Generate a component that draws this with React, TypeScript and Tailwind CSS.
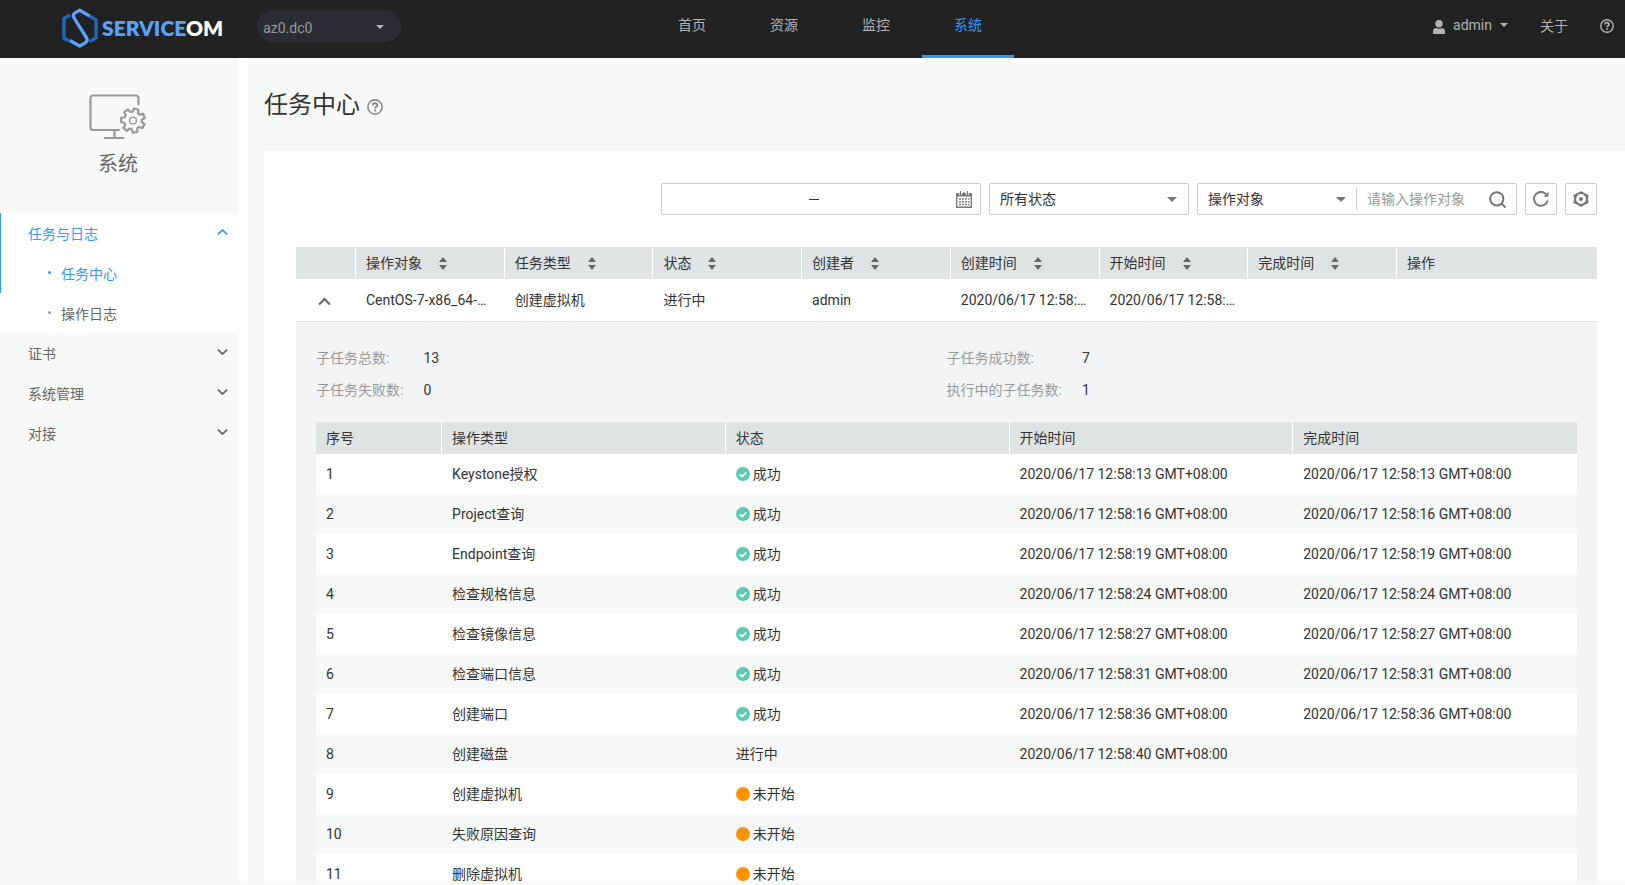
import React, { useState } from "react";

type Task = {
  id: number;
  type: string;
  status: "success" | "running" | "pending";
  start: string;
  end: string;
};

const tasks: Task[] = [
  { id: 1, type: "Keystone授权", status: "success", start: "2020/06/17 12:58:13 GMT+08:00", end: "2020/06/17 12:58:13 GMT+08:00" },
  { id: 2, type: "Project查询", status: "success", start: "2020/06/17 12:58:16 GMT+08:00", end: "2020/06/17 12:58:16 GMT+08:00" },
  { id: 3, type: "Endpoint查询", status: "success", start: "2020/06/17 12:58:19 GMT+08:00", end: "2020/06/17 12:58:19 GMT+08:00" },
  { id: 4, type: "检查规格信息", status: "success", start: "2020/06/17 12:58:24 GMT+08:00", end: "2020/06/17 12:58:24 GMT+08:00" },
  { id: 5, type: "检查镜像信息", status: "success", start: "2020/06/17 12:58:27 GMT+08:00", end: "2020/06/17 12:58:27 GMT+08:00" },
  { id: 6, type: "检查端口信息", status: "success", start: "2020/06/17 12:58:31 GMT+08:00", end: "2020/06/17 12:58:31 GMT+08:00" },
  { id: 7, type: "创建端口", status: "success", start: "2020/06/17 12:58:36 GMT+08:00", end: "2020/06/17 12:58:36 GMT+08:00" },
  { id: 8, type: "创建磁盘", status: "running", start: "2020/06/17 12:58:40 GMT+08:00", end: "" },
  { id: 9, type: "创建虚拟机", status: "pending", start: "", end: "" },
  { id: 10, type: "失败原因查询", status: "pending", start: "", end: "" },
  { id: 11, type: "删除虚拟机", status: "pending", start: "", end: "" },
];

function Caret({ className = "" }: { className?: string }) {
  return (
    <svg viewBox="0 0 10 5" className={className} fill="currentColor" aria-hidden="true">
      <path d="M0 0h10L5 5z" />
    </svg>
  );
}

function Chevron({ up = false, className = "" }: { up?: boolean; className?: string }) {
  return (
    <svg viewBox="0 0 12 8" className={className} fill="none" stroke="currentColor" strokeWidth="1.9" aria-hidden="true">
      <path d={up ? "M1 6.7 6 1.7l5 5" : "M1 1.3l5 5 5-5"} />
    </svg>
  );
}

function HelpIcon({ className = "" }: { className?: string }) {
  return (
    <svg viewBox="0 0 16 16" className={className} fill="none" stroke="currentColor" aria-hidden="true">
      <circle cx="8" cy="8" r="7.1" strokeWidth="1.6" />
      <path d="M5.7 6.4C5.700 5 6.700 4.200 8 4.200s2.300.8 2.300 2c0 1.500-2.200 1.600-2.200 3.300" strokeWidth="1.900" />
      <path d="M8.100 10.500v1.900" strokeWidth="2" />
    </svg>
  );
}

function SortIcon() {
  return (
    <svg viewBox="0 0 8 13" className="h-[13px] w-2 shrink-0 text-[#666]" fill="currentColor" aria-hidden="true">
      <path d="M4 0l4 5H0zM0 8h8l-4 5z" />
    </svg>
  );
}

function LogoMark() {
  return (
    <svg viewBox="0 0 36 40" className="h-10 w-9" fill="none" strokeWidth="3.4" aria-hidden="true">
      <path d="M8 7 1.900 10.600V30l5.600 3.200M27.500 8l6.600 3.900v17.800l-6.400 3.900" stroke="#2068b8" />
      <path d="M27.500 8 17.700 2.200l-4.600 2.700c-2 1.300-2.200 3.100-1 5.100l12.200 19.500c1.400 2.300.9 4.100-1 5.300l-5.600 3.200L8 32.500" stroke="#57a3fb" strokeLinejoin="round" />
    </svg>
  );
}

function gearPath(cx: number, cy: number) {
  const step = 360 / 7;
  const at = (r: number, deg: number) => {
    const a = (deg * Math.PI) / 180;
    return `${(cx + r * Math.cos(a)).toFixed(2)} ${(cy + r * Math.sin(a)).toFixed(2)}`;
  };
  const points: string[] = [];
  for (let i = 0; i < 7; i++) {
    const c = 80 + i * step;
    points.push(at(8.9, c - 18), at(12.1, c - 11), at(12.1, c + 11), at(8.9, c + 18));
  }
  return `M${points.join("L")}Z`;
}

function SystemIcon() {
  return (
    <svg viewBox="0 0 58 46" className="h-[46px] w-[58px]" fill="none" stroke="#999" strokeWidth="2.2" strokeLinecap="round" strokeLinejoin="round" aria-hidden="true">
      <path d="M49.500 10.500V4A2.500 2.500 0 0 0 47 1.500H4A2.500 2.500 0 0 0 1.500 4v29.500A2.500 2.500 0 0 0 4 36H30" />
      <path d="M25.500 36v7.500M16 44h18.500" />
      <path d={gearPath(44, 26.5)} />
      <circle cx="44" cy="26.5" r="3.4" strokeWidth="1.4" />
    </svg>
  );
}

function CalendarIcon() {
  return (
    <svg viewBox="0 0 16 17" className="h-[17px] w-4 text-[#777]" fill="none" stroke="currentColor" aria-hidden="true">
      <path d="M.7 3h14.600v13.200H.7z" strokeWidth="1.400" />
      <path d="M1 2.500h14v3H1z" fill="currentColor" stroke="none" />
      <path d="M4.500 0v4M11.500 0v4" stroke="#fff" strokeWidth="2.600" />
      <path d="M4.500 0v4M8 1v3M11.500 0v4" strokeWidth="1.200" />
      <path d="M3 8h2m1 0h2m1 0h2m1 0h1.500M3 10.700h2m1 0h2m1 0h2m1 0h1.500M3 13.400h2m1 0h2m1 0h2m1 0h1.500" strokeWidth="1.500" />
    </svg>
  );
}

function StatusCell({ status }: { status: Task["status"] }) {
  if (status === "running") return <>进行中</>;
  return (
    <span className="flex items-center gap-[3px]">
      {status === "success" ? (
        <svg viewBox="0 0 14 14" className="size-3.5" aria-hidden="true">
          <circle cx="7" cy="7" r="7" fill="#5acab2" />
          <path d="M3.700 7.200 6.200 9.600l4.200-4.400" fill="none" stroke="#fff" strokeWidth="1.600" />
        </svg>
      ) : (
        <span className="size-3.5 rounded-full bg-[#ff9300]" />
      )}
      {status === "success" ? "成功" : "未开始"}
    </span>
  );
}

function Header() {
  const items = ["首页", "资源", "监控", "系统"];
  return (
    <header className="flex h-[58px] shrink-0 bg-[#222] pl-[35px] text-[#b3b3b3]">
      <div className="flex min-w-0 flex-1 items-start">
        <a href="#home" className="mt-2 ml-[27px] flex items-center gap-1" aria-label="SERVICEOM">
          <LogoMark />
          <span className="font-[Lato] text-[21px] leading-10 font-extrabold text-[#57a3fb]">
            SERVICE<span className="text-white">OM</span>
          </span>
        </a>
        <div className="relative mt-2.5 ml-[34px] h-8 w-36">
          <select aria-label="区域" className="h-full w-full appearance-none rounded-full bg-[#2c2c35] pt-1 pl-1.5 text-[#999] outline-none">
            <option>az0.dc0</option>
          </select>
          <Caret className="pointer-events-none absolute top-[15px] right-[17px] h-1 w-2" />
        </div>
      </div>
      <nav className="flex">
        {items.map((label) => (
          <a
            key={label}
            href={`#${label}`}
            className={
              label === "系统"
                ? "flex w-[92px] justify-center border-b-3 border-[#3399ff] leading-[50px] text-[#3399ff]"
                : "flex w-[92px] justify-center leading-[50px]"
            }
          >
            {label}
          </a>
        ))}
      </nav>
      <div className="flex h-[50px] min-w-0 flex-1 items-center justify-end">
        <button className="flex items-center gap-2">
          <svg viewBox="0 0 12 14" className="mt-1 h-3.5 w-3" fill="currentColor" aria-hidden="true">
            <circle cx="6" cy="3.7" r="3.7" />
            <path d="M0 14v-2.500C0 9.500 1.300 8 3 8c1.800 1 4.200 1 6 0 1.700 0 3 1.500 3 3.500V14z" />
          </svg>
          admin
          <Caret className="h-1 w-2" />
        </button>
        <a href="#about" className="ml-8 pt-0.5">关于</a>
        <button aria-label="帮助" className="mr-[11px] ml-8 pt-0.5">
          <HelpIcon className="size-3.5" />
        </button>
      </div>
    </header>
  );
}

function Sidebar() {
  return (
    <aside className="w-[238px] shrink-0 bg-[#f7f9f8] text-[#666]">
      <div className="flex h-[155px] flex-col items-center pt-9 pr-0.5">
        <SystemIcon />
        <h2 className="mt-2 text-xl leading-8">系统</h2>
      </div>
      <nav>
        <div className="bg-white">
          <div className="border-l border-[#3399ff] text-[#3399ff]">
            <button className="flex h-10 w-full items-center justify-between pr-2.5 pl-[27px]">
              <span className="pt-0.5">任务与日志</span>
              <Chevron up className="mb-0.5 h-2 w-[11px]" />
            </button>
            <a href="#tasks" className="flex h-10 items-center gap-2.5 pl-[47px]">
              <span className="mb-0.5 size-[3px] rounded-full bg-current" />
              <span className="pt-0.5">任务中心</span>
            </a>
          </div>
          <a href="#logs" className="flex h-10 items-center gap-2.5 pl-12">
            <span className="mb-0.5 size-[3px] rounded-full bg-[#999]" />
            <span className="pt-0.5">操作日志</span>
          </a>
        </div>
        {["证书", "系统管理", "对接"].map((label) => (
          <button key={label} className="flex h-10 w-full items-center justify-between pr-2.5 pl-7">
            <span className="pt-0.5">{label}</span>
            <Chevron className="mb-0.5 h-2 w-[11px]" />
          </button>
        ))}
      </nav>
    </aside>
  );
}

function Toolbar() {
  return (
    <div className="flex h-8 justify-end gap-2">
      <div className="flex w-80 items-center rounded-xs border border-[#ccc] pr-2 pl-2.5">
        <input aria-label="起始日期" className="min-w-0 flex-1 outline-none" />
        <span className="h-px w-2.5 bg-[#333]" />
        <input aria-label="结束日期" className="min-w-0 flex-1 outline-none" />
        <button aria-label="选择日期">
          <CalendarIcon />
        </button>
      </div>
      <div className="relative w-[200px]">
        <select aria-label="状态" className="h-full w-full appearance-none rounded-xs border border-[#ccc] bg-white pl-2.5 outline-none">
          <option>所有状态</option>
        </select>
        <Caret className="pointer-events-none absolute top-3.5 right-3 h-[5px] w-2.5 text-[#777]" />
      </div>
      <div className="flex w-80 items-center rounded-xs border border-[#ccc]">
        <div className="relative h-[22px] w-[159px] border-r border-[#ccc]">
          <select aria-label="搜索字段" className="h-full w-full appearance-none bg-white pl-2.5 outline-none">
            <option>操作对象</option>
          </select>
          <Caret className="pointer-events-none absolute top-[9px] right-2.5 h-[5px] w-2.5 text-[#777]" />
        </div>
        <input aria-label="操作对象" placeholder="请输入操作对象" className="min-w-0 flex-1 pl-2.5 outline-none placeholder:text-[#999]" />
        <button aria-label="搜索" className="mr-2.5 text-[#777]">
          <svg viewBox="0 0 17 17" className="size-[17px]" fill="none" stroke="currentColor" strokeWidth="2" aria-hidden="true">
            <circle cx="7.8" cy="7.8" r="6.6" />
            <path d="m12.500 12.500 4 4" />
          </svg>
        </button>
      </div>
      <button aria-label="刷新" className="flex w-8 items-center justify-center rounded-xs border border-[#ccc] text-[#777]">
        <svg viewBox="0 0 16 16" className="size-4" fill="none" stroke="currentColor" strokeWidth="2" aria-hidden="true">
          <path d="M14.600 9.500A6.900 6.900 0 1 1 13 3.200" />
          <path d="M15.500.7v5.100h-5.100z" fill="currentColor" stroke="none" />
        </svg>
      </button>
      <button aria-label="设置" className="flex w-8 items-center justify-center rounded-xs border border-[#ccc] text-[#777]">
        <svg viewBox="0 0 16 16" className="size-4" fill="none" stroke="currentColor" strokeLinejoin="round" aria-hidden="true">
          <circle cx="8" cy="8" r="6" strokeWidth="2.200" />
          <path d="M8 .2 10 2H6zM15.300 4.100l-.5 2.700-2-3.400zM15.300 11.900l-2.500.7 2-3.400zM8 15.800 6 14h4zM.7 11.900l.5-2.700 2 3.400zM.7 4.100l2.500-.7-2 3.400z" fill="currentColor" strokeWidth=".6" />
          <circle cx="8" cy="8" r="2" fill="currentColor" stroke="none" />
        </svg>
      </button>
    </div>
  );
}

const columns = ["操作对象", "任务类型", "状态", "创建者", "创建时间", "开始时间", "完成时间"];
const detailColumns = ["序号", "操作类型", "状态", "开始时间", "完成时间"];

function Details() {
  return (
    <div className="bg-[#f3f4f6] px-5 pt-5">
      <dl className="grid grid-cols-2 leading-8">
        <div className="grid grid-cols-[max-content_1fr] gap-x-5">
          <dt className="text-[#999]">子任务总数:</dt>
          <dd>13</dd>
          <dt className="text-[#999]">子任务失败数:</dt>
          <dd>0</dd>
        </div>
        <div className="grid grid-cols-[max-content_1fr] gap-x-5">
          <dt className="text-[#999]">子任务成功数:</dt>
          <dd>7</dd>
          <dt className="text-[#999]">执行中的子任务数:</dt>
          <dd>1</dd>
        </div>
      </dl>
      <table className="mt-4 w-full table-fixed border-separate border-spacing-0 text-left">
        <thead>
          <tr className="h-8 bg-[#e0e3e4]">
            {detailColumns.map((label, i) => (
              <th
                key={label}
                className={
                  i === 0
                    ? "w-[10%] border-r border-white px-2.5 font-normal"
                    : "border-r border-white px-2.5 font-normal last:border-r-0"
                }
              >
                {label}
              </th>
            ))}
          </tr>
        </thead>
        <tbody>
          {tasks.map((task) => (
            <tr key={task.id} className="h-10 bg-white even:bg-[#f7f9f8]">
              <td className="px-2.5">{task.id}</td>
              <td className="px-2.5">{task.type}</td>
              <td className="px-2.5">
                <StatusCell status={task.status} />
              </td>
              <td className="px-2.5">{task.start}</td>
              <td className="px-2.5">{task.end}</td>
            </tr>
          ))}
        </tbody>
      </table>
    </div>
  );
}

function TaskTable() {
  const [open, setOpen] = useState(true);
  const cells = ["CentOS-7-x86_64-…", "创建虚拟机", "进行中", "admin", "2020/06/17 12:58:…", "2020/06/17 12:58:…", "", ""];
  return (
    <table className="mt-8 w-full table-fixed border-separate border-spacing-0 text-left">
      <thead>
        <tr className="h-8 bg-[#e0e3e4]">
          <th className="w-[60px] border-r border-white" aria-label="展开" />
          {columns.map((label) => (
            <th key={label} className="border-r border-white px-2.5 font-normal">
              <button className="flex items-center gap-[17px]">
                {label}
                <SortIcon />
              </button>
            </th>
          ))}
          <th className="w-[200px] px-2.5 font-normal">操作</th>
        </tr>
      </thead>
      <tbody>
        <tr className="h-[43px]">
          <td className="border-b border-[#e0e3e4]">
            <button aria-label="展开任务" aria-expanded={open} onClick={() => setOpen(!open)} className="flex w-full justify-center pt-0.5 pr-[3px]">
              <Chevron up={open} className="h-[9px] w-[13px] text-[#666]" />
            </button>
          </td>
          {cells.map((text, i) => (
            <td key={i} className="border-b border-[#e0e3e4] px-2.5 whitespace-nowrap">{text}</td>
          ))}
        </tr>
        {open && (
          <tr>
            <td colSpan={9} className="p-0">
              <Details />
            </td>
          </tr>
        )}
      </tbody>
    </table>
  );
}

export default function App() {
  return (
    <div className="flex h-screen flex-col overflow-hidden bg-[#f7f9f8] pb-1 font-[Roboto,'Noto_Sans_CJK_SC',sans-serif] text-sm text-[#333]">
      <Header />
      <div className="flex min-h-0 flex-1 gap-2.5 bg-white">
        <Sidebar />
        <main className="flex min-w-0 flex-1 flex-col overflow-hidden bg-[#f7f9f8] pl-4">
          <div className="flex h-[93px] shrink-0 items-center gap-[7px]">
            <h1 className="text-2xl">任务中心</h1>
            <button aria-label="帮助" className="pt-1 text-[#888]">
              <HelpIcon className="size-4" />
            </button>
          </div>
          <section className="min-h-0 flex-1 overflow-hidden bg-white pt-8 pr-7 pl-8">
            <Toolbar />
            <TaskTable />
          </section>
        </main>
      </div>
    </div>
  );
}
